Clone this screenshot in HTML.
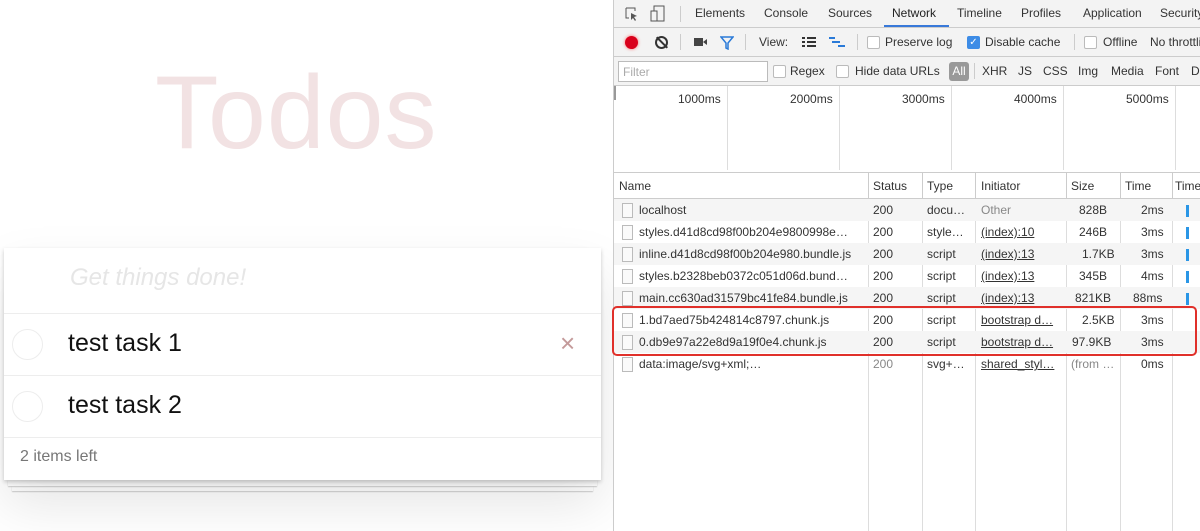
<!DOCTYPE html>
<html><head><style>
*{box-sizing:border-box;margin:0;padding:0}
body{width:1200px;height:531px;overflow:hidden;background:#fff;font-family:"Liberation Sans",sans-serif;position:relative}
.abs{position:absolute;white-space:nowrap}
.title{left:155px;top:54px;font-size:104px;color:#f2e2e3;font-weight:normal;letter-spacing:1px}
.card{left:4px;top:248px;width:597px;height:232px;background:#fff;box-shadow:0 2px 4px rgba(0,0,0,.2),0 25px 50px rgba(0,0,0,.1)}
.st1{left:8px;top:480px;width:589px;height:6px;background:#fff;box-shadow:0 1px 1px rgba(0,0,0,.2)}
.st2{left:12px;top:486px;width:581px;height:5px;background:#fff;box-shadow:0 1px 1px rgba(0,0,0,.2)}
.row{position:absolute;left:0;width:597px;border-top:1px solid #ededed}
.circ{position:absolute;left:8px;width:31px;height:31px;border:1px solid #ededed;border-radius:50%}
.task{position:absolute;left:64px;font-size:25px;color:#111}
.dt{left:613px;top:0;width:587px;height:531px;background:#fff;border-left:1px solid #ccc;font-size:12px;color:#333}
.bar{position:absolute;left:0;width:587px;background:#f3f3f3;border-bottom:1px solid #ccc}
.t{position:absolute;top:6px;white-space:nowrap}
.cb{position:absolute;width:13px;height:13px;border:1px solid #bbb;border-radius:2px;background:#fff}
.grid{position:absolute;top:86px;height:84px;border-left:1px solid #ddd}
.hd{position:absolute;top:172px;left:0;width:587px;height:27px;border-top:1px solid #ccc;border-bottom:1px solid #ccc;background:#fff}
.col{position:absolute;top:0;bottom:0;border-left:1px solid #ccc}
.r{position:absolute;left:0;width:587px;height:22px;font-size:12px}
.r span{position:absolute;top:4px;white-space:nowrap}
.ic{position:absolute;left:8px;top:4px;width:11px;height:15px;border:1px solid #bbb;background:#fafafa}
.u{text-decoration:underline}
.vl{position:absolute;top:199px;bottom:0;border-left:1px solid #ddd}
</style></head><body>
<div class="abs title">Todos</div>
<div class="abs st2"></div><div class="abs st1"></div>
<div class="abs card">
 <div class="abs" style="left:66px;top:16px;font-size:24px;font-style:italic;color:#e6e6e6">Get things done!</div>
 <div class="row" style="top:65px;height:62px"><div class="circ" style="top:15px"></div><div class="task" style="top:15px">test task 1</div><div class="abs" style="left:556px;top:14px;font-size:26px;color:#c49a9a">×</div></div>
 <div class="row" style="top:127px;height:62px"><div class="circ" style="top:15px"></div><div class="task" style="top:15px">test task 2</div></div>
 <div class="row" style="top:189px;height:43px"><div class="abs" style="left:16px;top:10px;font-size:16px;color:#777">2 items left</div></div>
</div>
<div class="abs dt">
 <div class="bar" style="top:0;height:28px">
  <svg class="abs" style="left:10px;top:6px" width="16" height="16"><path d="M2 2h9v3M2 2v10h3" stroke="#555" fill="none"/><path d="M7 7l6 3-3 1 2 3-1 1-2-3-2 2z" fill="#555"/></svg>
  <svg class="abs" style="left:36px;top:5px" width="16" height="18"><rect x="4" y="1" width="10" height="15" stroke="#555" fill="none"/><rect x="1" y="6" width="6" height="10" stroke="#555" fill="#f3f3f3"/></svg>
  <div class="abs" style="left:66px;top:6px;height:16px;border-left:1px solid #ccc"></div>
  <span class="t" style="left:81px">Elements</span><span class="t" style="left:150px">Console</span><span class="t" style="left:214px">Sources</span><span class="t" style="left:278px;color:#222">Network</span><span class="t" style="left:343px">Timeline</span><span class="t" style="left:407px">Profiles</span><span class="t" style="left:469px">Application</span><span class="t" style="left:546px">Security</span>
  <div class="abs" style="left:270px;top:25px;width:65px;height:2px;background:#3879d9"></div>
 </div>
 <div class="bar" style="top:28px;height:29px">
  <div class="abs" style="left:11px;top:8px;width:13px;height:13px;border-radius:50%;background:#d9001b;box-shadow:0 0 3px #f66"></div>
  <div class="abs" style="left:41px;top:8px;width:13px;height:13px;border-radius:50%;border:2px solid #333"></div><div class="abs" style="left:47px;top:7px;width:2px;height:15px;background:#333;transform:rotate(-45deg)"></div>
  <div class="abs" style="left:66px;top:6px;height:16px;border-left:1px solid #ccc"></div>
  <div class="abs" style="left:80px;top:10px;width:9px;height:8px;background:#444"></div><div class="abs" style="left:89px;top:11px;border:3px solid transparent;border-right:4px solid #444;border-left:0"></div>
  <svg class="abs" style="left:106px;top:8px" width="14" height="14"><path d="M1 1h12l-5 6v6l-2-1V7z" stroke="#2a7ad8" stroke-width="1.5" fill="none"/></svg>
  <div class="abs" style="left:131px;top:6px;height:16px;border-left:1px solid #ccc"></div>
  <span class="t" style="left:145px;top:7px">View:</span>
  <svg class="abs" style="left:188px;top:9px" width="14" height="11"><path d="M0 1h3M5 1h9M0 5h3M5 5h9M0 9h3M5 9h9" stroke="#333" stroke-width="2"/></svg>
  <svg class="abs" style="left:215px;top:9px" width="16" height="11"><path d="M0 1h6M3 5h8M9 9h7" stroke="#2a7ad8" stroke-width="2"/></svg>
  <div class="abs" style="left:243px;top:6px;height:16px;border-left:1px solid #ccc"></div>
  <div class="cb" style="left:253px;top:8px"></div><span class="t" style="left:271px;top:7px">Preserve log</span>
  <div class="cb" style="left:353px;top:8px;background:#3d8ce6;border-color:#3d8ce6;color:#fff;font-size:10px;line-height:11px;text-align:center">✓</div><span class="t" style="left:371px;top:7px">Disable cache</span>
  <div class="abs" style="left:460px;top:6px;height:16px;border-left:1px solid #ccc"></div>
  <div class="cb" style="left:470px;top:8px"></div><span class="t" style="left:489px;top:7px">Offline</span><span class="t" style="left:536px;top:7px">No throttling</span>
 </div>
 <div class="bar" style="top:57px;height:29px">
  <div class="abs" style="left:4px;top:4px;width:150px;height:21px;border:1px solid #bbb;background:#fff;color:#aaa;padding:3px 4px">Filter</div>
  <div class="cb" style="left:159px;top:8px"></div><span class="t" style="left:176px;top:7px">Regex</span>
  <div class="cb" style="left:222px;top:8px"></div><span class="t" style="left:241px;top:7px">Hide data URLs</span>
  <div class="abs" style="left:335px;top:5px;width:20px;height:19px;background:#999;border-radius:3px;color:#fff;text-align:center;line-height:19px">All</div>
  <div class="abs" style="left:360px;top:6px;height:16px;border-left:1px solid #ccc"></div>
  <span class="t" style="left:368px;top:7px">XHR</span><span class="t" style="left:404px;top:7px">JS</span><span class="t" style="left:429px;top:7px">CSS</span><span class="t" style="left:464px;top:7px">Img</span><span class="t" style="left:497px;top:7px">Media</span><span class="t" style="left:541px;top:7px">Font</span><span class="t" style="left:577px;top:7px">Doc</span>
 </div>
 <div class="abs" style="left:0;top:86px;height:14px;border-left:2px solid #999"></div>
 <div class="grid" style="left:113px"></div><div class="grid" style="left:225px"></div><div class="grid" style="left:337px"></div><div class="grid" style="left:449px"></div><div class="grid" style="left:561px"></div>
 <span class="abs" style="left:64px;top:92px">1000ms</span><span class="abs" style="left:176px;top:92px">2000ms</span><span class="abs" style="left:288px;top:92px">3000ms</span><span class="abs" style="left:400px;top:92px">4000ms</span><span class="abs" style="left:512px;top:92px">5000ms</span>
 <div class="hd">
  <span class="abs" style="left:5px;top:6px">Name</span>
  <div class="col" style="left:254px"></div><span class="abs" style="left:259px;top:6px">Status</span>
  <div class="col" style="left:308px"></div><span class="abs" style="left:313px;top:6px">Type</span>
  <div class="col" style="left:361px"></div><span class="abs" style="left:367px;top:6px">Initiator</span>
  <div class="col" style="left:452px"></div><span class="abs" style="left:457px;top:6px">Size</span>
  <div class="col" style="left:506px"></div><span class="abs" style="left:511px;top:6px">Time</span>
  <div class="col" style="left:558px"></div><span class="abs" style="left:561px;top:6px">Timeline</span>
 </div>
 <div class="vl" style="left:254px"></div><div class="vl" style="left:308px"></div><div class="vl" style="left:361px"></div><div class="vl" style="left:452px"></div><div class="vl" style="left:506px"></div><div class="vl" style="left:558px"></div>
 <div class="r" style="top:199px;background:#f5f5f5"><div class="ic"></div><span style="left:25px">localhost</span><span style="left:259px">200</span><span style="left:313px">docu…</span><span style="left:367px;color:#888">Other</span><span style="left:465px">828B</span><span style="left:527px">2ms</span></div>
 <div class="r" style="top:221px"><div class="ic"></div><span style="left:25px">styles.d41d8cd98f00b204e9800998e…</span><span style="left:259px">200</span><span style="left:313px">style…</span><span style="left:367px" class="u">(index):10</span><span style="left:465px">246B</span><span style="left:527px">3ms</span></div>
 <div class="r" style="top:243px;background:#f5f5f5"><div class="ic"></div><span style="left:25px">inline.d41d8cd98f00b204e980.bundle.js</span><span style="left:259px">200</span><span style="left:313px">script</span><span style="left:367px" class="u">(index):13</span><span style="left:468px">1.7KB</span><span style="left:527px">3ms</span></div>
 <div class="r" style="top:265px"><div class="ic"></div><span style="left:25px">styles.b2328beb0372c051d06d.bund…</span><span style="left:259px">200</span><span style="left:313px">script</span><span style="left:367px" class="u">(index):13</span><span style="left:465px">345B</span><span style="left:527px">4ms</span></div>
 <div class="r" style="top:287px;background:#f5f5f5"><div class="ic"></div><span style="left:25px">main.cc630ad31579bc41fe84.bundle.js</span><span style="left:259px">200</span><span style="left:313px">script</span><span style="left:367px" class="u">(index):13</span><span style="left:461px">821KB</span><span style="left:519px">88ms</span></div>
 <div class="r" style="top:309px"><div class="ic"></div><span style="left:25px">1.bd7aed75b424814c8797.chunk.js</span><span style="left:259px">200</span><span style="left:313px">script</span><span style="left:367px" class="u">bootstrap d…</span><span style="left:468px">2.5KB</span><span style="left:527px">3ms</span></div>
 <div class="r" style="top:331px;background:#f5f5f5"><div class="ic"></div><span style="left:25px">0.db9e97a22e8d9a19f0e4.chunk.js</span><span style="left:259px">200</span><span style="left:313px">script</span><span style="left:367px" class="u">bootstrap d…</span><span style="left:458px">97.9KB</span><span style="left:527px">3ms</span></div>
 <div class="r" style="top:353px"><div class="ic"></div><span style="left:25px">data:image/svg+xml;…</span><span style="left:259px;color:#888">200</span><span style="left:313px">svg+…</span><span style="left:367px" class="u">shared_styl…</span><span style="left:457px;color:#888">(from …</span><span style="left:527px">0ms</span></div>
 <div class="abs" style="left:572px;top:205px;width:3px;height:12px;background:#2a96e6"></div>
 <div class="abs" style="left:572px;top:227px;width:3px;height:12px;background:#2a96e6"></div>
 <div class="abs" style="left:572px;top:249px;width:3px;height:12px;background:#2a96e6"></div>
 <div class="abs" style="left:572px;top:271px;width:3px;height:12px;background:#2a96e6"></div>
 <div class="abs" style="left:572px;top:293px;width:3px;height:12px;background:#2a96e6"></div>
 <div class="abs" style="left:-2px;top:306px;width:585px;height:50px;border:2px solid #e0302a;border-radius:5px"></div>
</div>
</body></html>
